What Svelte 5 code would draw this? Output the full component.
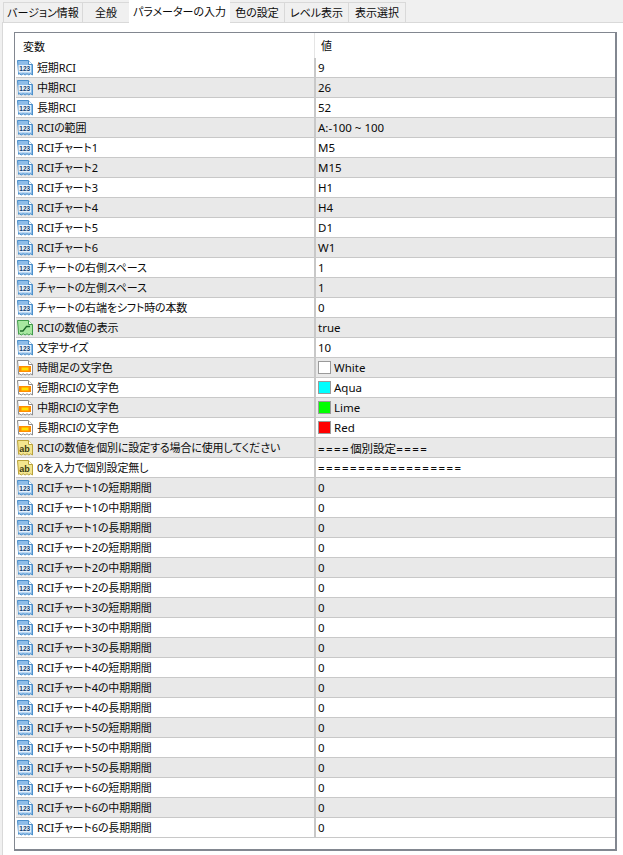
<script>
  const tabs = [
    { label: "バージョン情報", width: 80 },
    { label: "全般", width: 48 },
    { label: "パラメーターの入力", width: 101, active: true },
    { label: "色の設定", width: 56 },
    { label: "レベル表示", width: 65 },
    { label: "表示選択", width: 58 },
  ];

  const base = [
    ["num", "短期RCI", "9"],
    ["num", "中期RCI", "26"],
    ["num", "長期RCI", "52"],
    ["num", "RCIの範囲", "A:-100 ~ 100"],
    ["num", "RCIチャート1", "M5"],
    ["num", "RCIチャート2", "M15"],
    ["num", "RCIチャート3", "H1"],
    ["num", "RCIチャート4", "H4"],
    ["num", "RCIチャート5", "D1"],
    ["num", "RCIチャート6", "W1"],
    ["num", "チャートの右側スペース", "1"],
    ["num", "チャートの左側スペース", "1"],
    ["num", "チャートの右端をシフト時の本数", "0"],
    ["bool", "RCIの数値の表示", "true"],
    ["num", "文字サイズ", "10"],
    ["color", "時間足の文字色", "White", "#ffffff"],
    ["color", "短期RCIの文字色", "Aqua", "#00ffff"],
    ["color", "中期RCIの文字色", "Lime", "#00ff00"],
    ["color", "長期RCIの文字色", "Red", "#ff0000"],
    ["str", "RCIの数値を個別に設定する場合に使用してください", "====個別設定===="],
    ["str", "0を入力で個別設定無し", "=================="],
  ];

  const periods = [];
  for (let c = 1; c <= 6; c++) {
    for (const p of ["短期", "中期", "長期"]) {
      periods.push(["num", `RCIチャート${c}の${p}期間`, "0"]);
    }
  }

  const rows = [...base, ...periods];
</script>

{#snippet fileIcon(fill, stroke)}
  <path d="M.5 .5h11l4 4v10.5l-1.8-1.2-1.8 1.2-1.9-1.2-1.9 1.2-1.9-1.2-1.9 1.2-1.9-1.2-.7.6z" fill={fill} stroke={stroke} />
  <path d="M11.5 .5v4h4" fill="#fff" stroke={stroke} />
{/snippet}

{#snippet icon(kind)}
  <svg class="icon" width="16" height="16" viewBox="0 0 16 16">
    {#if kind === "num"}
      {@render fileIcon("#8fbde8", "#4a8fcb")}
      <rect x="1.5" y="5" width="12.5" height="7.5" fill="#e8f2fb" />
      <text x="7.8" y="11.2" class="tiny num">123</text>
    {:else if kind === "bool"}
      {@render fileIcon("#a8e8a0", "#3f9a4a")}
      <path d="M3 11h3l3.5-4.5h3.5" fill="none" stroke="#1d6a2a" stroke-width="1.3" />
    {:else if kind === "color"}
      {@render fileIcon("#ffffff", "#8a8a8a")}
      <rect x="2" y="6" width="12" height="6" fill="#ff8c00" />
      <rect x="4.5" y="7.5" width="7" height="3" fill="#ffe000" />
    {:else}
      {@render fileIcon("#f3e58e", "#b9a23a")}
      <text x="7.5" y="11.5" class="tiny ab">ab</text>
    {/if}
  </svg>
{/snippet}

<div class="window">
  <div class="tabs">
    {#each tabs as tab}
      <div class="tab" class:active={tab.active} style="width: {tab.width}px">{tab.label}</div>
    {/each}
  </div>

  <div class="panel">
    <div class="table">
      <div class="head">
        <div class="name-cell">変数</div>
        <div class="value-cell">値</div>
      </div>
      {#each rows as row, i}
        <div class="row" class:alt={i % 2 === 1}>
          <div class="name">
            {@render icon(row[0])}
            <span class="label">{row[1]}</span>
          </div>
          <div class="value">
            {#if row[3]}
              <span class="swatch" style="background: {row[3]}"></span>
            {/if}
            <span>
              {#each row[2].split(/(=+)/) as part}
                {#if part.startsWith("=")}<span class="eq">{part}</span>{:else}{part}{/if}
              {/each}
            </span>
          </div>
        </div>
      {/each}
    </div>
  </div>
</div>

<style>
  :global(body) {
    background: #f0f0f0;
  }

  .window {
    width: 623px;
    height: 855px;
    display: flex;
    flex-direction: column;
    font-family: "Noto Sans", "Noto Sans CJK JP", sans-serif;
    font-size: 11px;
    font-feature-settings: "palt";
    color: #0a0a0a;
    overflow: hidden;
  }

  .tabs {
    height: 22px;
    display: flex;
    align-items: flex-end;
    padding-left: 3px;
    flex-shrink: 0;
  }

  .tab {
    height: 20px;
    box-sizing: border-box;
    border: 1px solid #d9d9d9;
    border-bottom: none;
    margin-right: -1px;
    background: #f0f0f0;
    text-align: center;
    line-height: 20px;
    white-space: nowrap;
  }

  .tab.active {
    height: 23px;
    margin-bottom: -1px;
    background: #fff;
    border-color: #fff;
    position: relative;
    line-height: 22px;
  }

  .panel {
    flex: 1;
    margin-left: 2px;
    background: #fff;
    border-top: 1px solid #d9d9d9;
    border-left: 1px solid #d9d9d9;
    padding: 9px 6px 4px 11px;
    display: flex;
  }

  .table {
    flex: 1;
    box-sizing: border-box;
    border: 1px solid #828790;
    border-width: 1px 2px 2px 1px;
    padding-left: 1px;
  }

  .head {
    height: 25px;
    display: flex;
    align-items: center;
  }

  .name-cell {
    width: 298px;
    padding-left: 7px;
    box-sizing: border-box;
    flex-shrink: 0;
  }

  .value-cell {
    flex: 1;
    height: 100%;
    border-left: 1px solid #e5e5e5;
    padding-left: 6px;
    line-height: 25px;
  }

  .row {
    height: 20px;
    box-sizing: border-box;
    border-bottom: 1px solid #c8c8c8;
    display: flex;
    background: #fff;
  }

  .row.alt {
    background: #e9e9e9;
  }

  .name {
    width: 298px;
    flex-shrink: 0;
    display: flex;
    align-items: center;
    gap: 4px;
    padding-left: 1px;
    box-sizing: border-box;
    white-space: nowrap;
    overflow: hidden;
  }

  .label {
    letter-spacing: -0.15px;
    margin-bottom: 1px;
  }

  .icon {
    flex-shrink: 0;
  }

  .value {
    flex: 1;
    border-left: 2px solid #c8c8c8;
    padding-left: 2px;
    display: flex;
    align-items: center;
    gap: 3px;
    font-size: 11.5px;
    white-space: nowrap;
  }

  .eq {
    letter-spacing: 1.45px;
  }

  .swatch {
    width: 11px;
    height: 11px;
    border: 1px solid #9a9a9a;
    flex-shrink: 0;
  }

  .tiny {
    font-family: "Liberation Sans", sans-serif;
    font-weight: 700;
    text-anchor: middle;
  }

  .num {
    font-size: 6.5px;
    fill: #123f70;
  }

  .ab {
    font-size: 9px;
    fill: #3a3a10;
  }
</style>
